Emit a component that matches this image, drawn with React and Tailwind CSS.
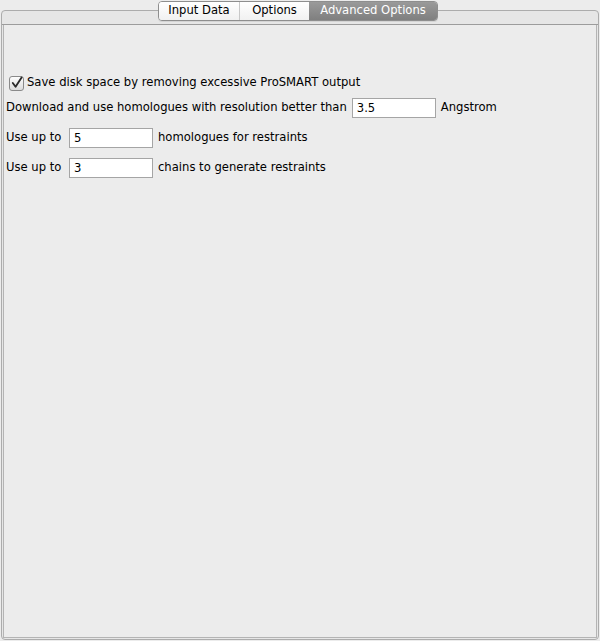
import React, { useState } from 'react';

export default function App() {
    const [saveSpace, setSaveSpace] = useState(true);
    const [resolution, setResolution] = useState("3.5");
    const [homologues, setHomologues] = useState("5");
    const [chains, setChains] = useState("3");

    return (
        <div className="w-[600px] h-[641px] bg-[#ececec] relative pt-[10px] px-[1px] pb-[1px] text-[11.6px] text-black" style={{ fontFamily: '"DejaVu Sans", "Lucida Grande", sans-serif' }}>
            {/* Frame */}
            <div className="h-full flex flex-col border border-[#acacac] rounded-[4px] bg-[#e6e6e6]">
                <div className="h-[14px] border-b border-[#9c9c9c] shrink-0" />
                <div className="flex-1 mx-[1px] mb-[1px] border-l border-r border-b border-[#b4b4b4] bg-[#ececec] pt-[48px] pl-[2px]">
                    {/* Save disk space */}
                    <label className="flex items-center h-[20px] pl-[3px] gap-[3px]">
                        <span
                            onClick={() => setSaveSpace(!saveSpace)}
                            className="w-[15px] h-[15px] border border-[#8a8a8a] rounded-[3px] bg-gradient-to-b from-[#fdfdfd] to-[#dcdcdc] flex items-center justify-center"
                        >
                            {saveSpace && (
                                <svg width="14" height="14" viewBox="0 0 14 14">
                                    <path d="M3 7 L6 11 L12.5 1" fill="none" stroke="#2a2a2a" strokeWidth="2" strokeLinecap="round" strokeLinejoin="round" />
                                </svg>
                            )}
                        </span>
                        <span>Save disk space by removing excessive ProSMART output</span>
                    </label>

                    <div className="flex items-center h-[20px] mt-[5px]">
                        <span>Download and use homologues with resolution better than</span>
                        <input
                            value={resolution}
                            onChange={(e) => setResolution(e.target.value)}
                            className="ml-[5px] w-[84px] h-[20px] bg-white border border-[#a5a5a5] px-[4px] outline-none"
                        />
                        <span className="ml-[5px]">Angstrom</span>
                    </div>

                    <div className="flex items-center h-[20px] mt-[10px]">
                        <span className="w-[63px]">Use up to</span>
                        <input
                            value={homologues}
                            onChange={(e) => setHomologues(e.target.value)}
                            className="w-[84px] h-[20px] bg-white border border-[#a5a5a5] px-[4px] outline-none"
                        />
                        <span className="ml-[5px]">homologues for restraints</span>
                    </div>

                    <div className="flex items-center h-[20px] mt-[10px]">
                        <span className="w-[63px]">Use up to</span>
                        <input
                            value={chains}
                            onChange={(e) => setChains(e.target.value)}
                            className="w-[84px] h-[20px] bg-white border border-[#a5a5a5] px-[4px] outline-none"
                        />
                        <span className="ml-[5px]">chains to generate restraints</span>
                    </div>
                </div>
            </div>

            {/* Tabs overlaying the frame edge */}
            <div className="absolute top-[1px] left-[158px] flex h-[20px] rounded-[4px] border border-[#8e8e8e] overflow-hidden shadow-[0_1px_0_rgba(0,0,0,0.08)]">
                <div className="w-[81px] flex items-center justify-center bg-gradient-to-b from-white to-[#f1f1f1] border-r border-[#c8c8c8]">Input Data</div>
                <div className="w-[69px] flex items-center justify-center bg-gradient-to-b from-white to-[#f1f1f1]">Options</div>
                <div className="w-[128px] flex items-center justify-center bg-gradient-to-b from-[#9a9a9a] to-[#7f7f7f] text-white">Advanced Options</div>
            </div>
        </div>
    );
}
